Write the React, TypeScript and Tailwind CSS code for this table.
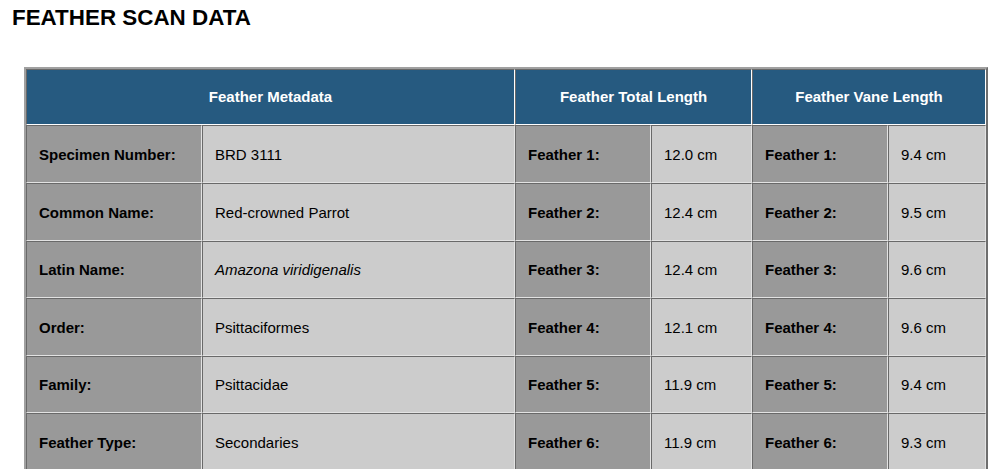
import React from "react";

const meta: [string, React.ReactNode][] = [
  ["Specimen Number:", "BRD 3111"],
  ["Common Name:", "Red-crowned Parrot"],
  ["Latin Name:", <i>Amazona viridigenalis</i>],
  ["Order:", "Psittaciformes"],
  ["Family:", "Psittacidae"],
  ["Feather Type:", "Secondaries"],
];
const total = ["12.0", "12.4", "12.4", "12.1", "11.9", "11.9"];
const vane = ["9.4", "9.5", "9.6", "9.6", "9.4", "9.3"];

const th =
  "bg-[#265a80] text-white font-bold text-center align-middle border border-t-[#696969] border-l-[#696969] border-r-white border-b-white";
const lab =
  "bg-[#999999] font-bold text-left align-middle pl-[12px] pt-[2px] border border-t-[#696969] border-l-[#696969] border-r-[#e3e3e3] border-b-[#e3e3e3]";
const val =
  "bg-[#cccccc] text-left align-middle pl-[12px] pt-[2px] border border-t-[#696969] border-l-[#696969] border-r-[#e3e3e3] border-b-[#e3e3e3]";

export default function App() {
  return (
    <div
      className="bg-white text-black min-h-screen"
      style={{ fontFamily: '"Liberation Sans", Arial, sans-serif' }}
    >
      <h1 className="text-[22.4px] font-bold leading-none pl-[12px] pt-[7px] m-0">FEATHER SCAN DATA</h1>
      <div className="pl-[24px] pt-[38px]">
        <table className="table-fixed border-separate border-spacing-0 w-[964px] border-2 border-t-[#a0a0a0] border-l-[#a0a0a0] border-r-[#6e6e6e] border-b-[#6e6e6e] text-[15px]">
          <colgroup>
            <col className="w-[176px]" />
            <col className="w-[313px]" />
            <col className="w-[136px]" />
            <col className="w-[101px]" />
            <col className="w-[136px]" />
            <col className="w-[98px]" />
          </colgroup>
          <thead>
            <tr className="h-[56px]">
              <th colSpan={2} className={th}>Feather Metadata</th>
              <th colSpan={2} className={th}>Feather Total Length</th>
              <th colSpan={2} className={th}>Feather Vane Length</th>
            </tr>
          </thead>
          <tbody>
            {meta.map(([k, v], i) => (
              <tr key={i} className="h-[57.6px]">
                <td className={lab}>{k}</td>
                <td className={val}>{v}</td>
                <td className={lab}>Feather {i + 1}:</td>
                <td className={val}>{total[i]} cm</td>
                <td className={lab}>Feather {i + 1}:</td>
                <td className={val}>{vane[i]} cm</td>
              </tr>
            ))}
          </tbody>
        </table>
      </div>
    </div>
  );
}
